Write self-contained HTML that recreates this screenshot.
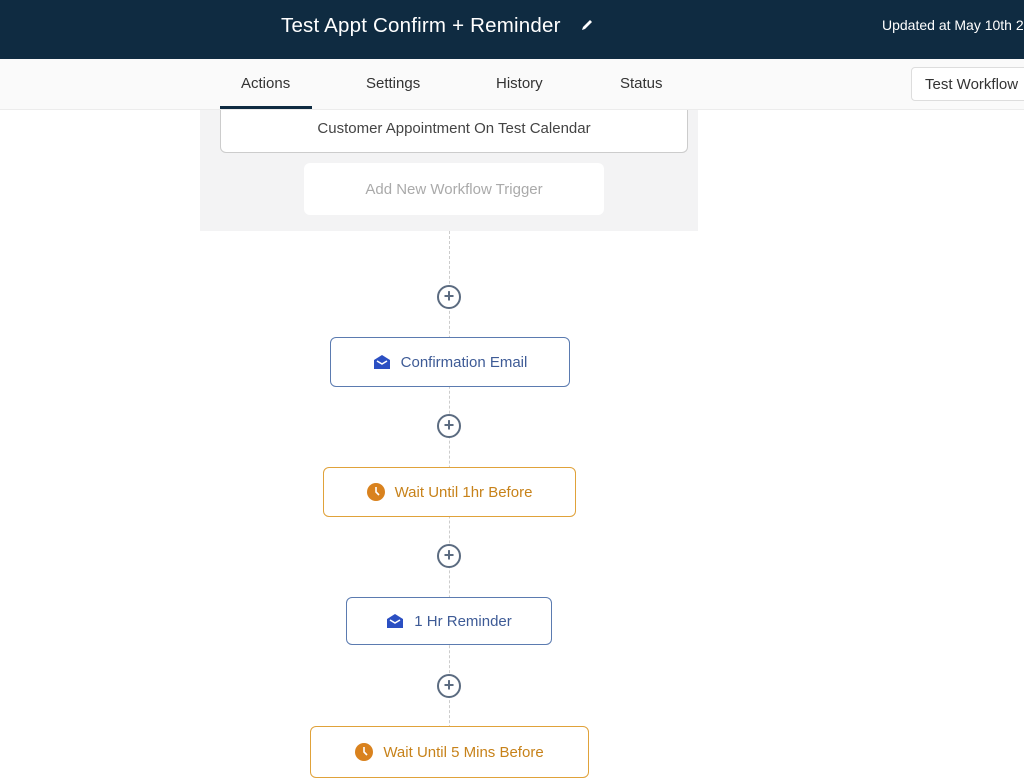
<!DOCTYPE html>
<html><head><style>
*{box-sizing:border-box;margin:0;padding:0}
body{width:1024px;height:768px;overflow:hidden;background:#fff;font-family:"Liberation Sans",sans-serif;position:relative}
.a{position:absolute}
.hdr{left:0;top:0;width:1024px;height:59px;background:#0f2b41}
.nav{left:0;top:59px;width:1024px;height:51px;background:#fafafa;border-bottom:1px solid #ececec}
.tab{top:75px;font-size:15px;color:#333}
.box{display:flex;align-items:center;justify-content:center;border-radius:6px;font-size:15px;background:#fff}
.blue{border:1.5px solid #5b7bb0;color:#3e5b96}
.org{border:1.5px solid #e0a23a;color:#c7821a}
.plus{width:24px;height:24px;border:2px solid #5b6b80;border-radius:50%;background:#fff;color:#5b6b80;font-size:18px;line-height:19px;text-align:center;font-weight:bold}
.ic{margin-right:10px}
</style></head><body>
<div class="a hdr"></div>
<div class="a" style="left:281px;top:14px;color:#fff;font-size:20.5px;letter-spacing:0.2px">Test Appt Confirm + Reminder</div>
<svg class="a" style="left:580px;top:18px" width="14" height="14" viewBox="0 0 14 14"><path d="M2 12 L3 9 L10 2 L12 4 L5 11 Z" fill="#fff"/></svg>
<div class="a" style="left:882px;top:17px;color:#fff;font-size:14px;white-space:nowrap">Updated at May 10th 2</div>
<div class="a nav"></div>
<div class="a tab" style="left:241px">Actions</div>
<div class="a" style="left:220px;top:106px;width:92px;height:3px;background:#0f2b41"></div>
<div class="a tab" style="left:366px">Settings</div>
<div class="a tab" style="left:496px">History</div>
<div class="a tab" style="left:620px">Status</div>
<div class="a" style="left:911px;top:67px;width:130px;height:34px;border:1px solid #ddd;border-radius:4px;background:#fff;font-size:15px;color:#333;padding:8px 13px;white-space:nowrap">Test Workflow</div>
<div class="a" style="left:200px;top:110px;width:498px;height:121px;background:#f3f3f4"></div>
<div class="a box" style="left:220px;top:110px;width:468px;height:43px;border:1px solid #ccc;border-top:none;border-radius:0 0 6px 6px;color:#444;padding-bottom:6px">Customer Appointment On Test Calendar</div>
<div class="a box" style="left:304px;top:163px;width:300px;height:52px;color:#aaa">Add New Workflow Trigger</div>
<div class="a" style="left:449px;top:231px;width:0;height:537px;border-left:1px dashed #ccc"></div>
<div class="a plus" style="left:437px;top:285px">+</div>
<div class="a plus" style="left:437px;top:414px">+</div>
<div class="a plus" style="left:437px;top:544px">+</div>
<div class="a plus" style="left:437px;top:674px">+</div>
<div class="a box blue" style="left:330px;top:337px;width:240px;height:50px"><svg class="ic" width="18" height="16" viewBox="0 0 18 16"><path d="M1 6 L9 1 L17 6 V15 H1 Z" fill="#2b4fc2"/><path d="M4 7 L9 10 L14 7" stroke="#fff" stroke-width="1.6" fill="none"/></svg>Confirmation Email</div>
<div class="a box org" style="left:323px;top:467px;width:253px;height:50px"><svg class="ic" width="18" height="18" viewBox="0 0 18 18"><circle cx="9" cy="9" r="9" fill="#d9821e"/><path d="M9 4 V9 L12 12" stroke="#fff" stroke-width="1.6" fill="none"/></svg>Wait Until 1hr Before</div>
<div class="a box blue" style="left:346px;top:597px;width:206px;height:48px"><svg class="ic" width="18" height="16" viewBox="0 0 18 16"><path d="M1 6 L9 1 L17 6 V15 H1 Z" fill="#2b4fc2"/><path d="M4 7 L9 10 L14 7" stroke="#fff" stroke-width="1.6" fill="none"/></svg>1 Hr Reminder</div>
<div class="a box org" style="left:310px;top:726px;width:279px;height:52px"><svg class="ic" width="18" height="18" viewBox="0 0 18 18"><circle cx="9" cy="9" r="9" fill="#d9821e"/><path d="M9 4 V9 L12 12" stroke="#fff" stroke-width="1.6" fill="none"/></svg>Wait Until 5 Mins Before</div>
</body></html>
